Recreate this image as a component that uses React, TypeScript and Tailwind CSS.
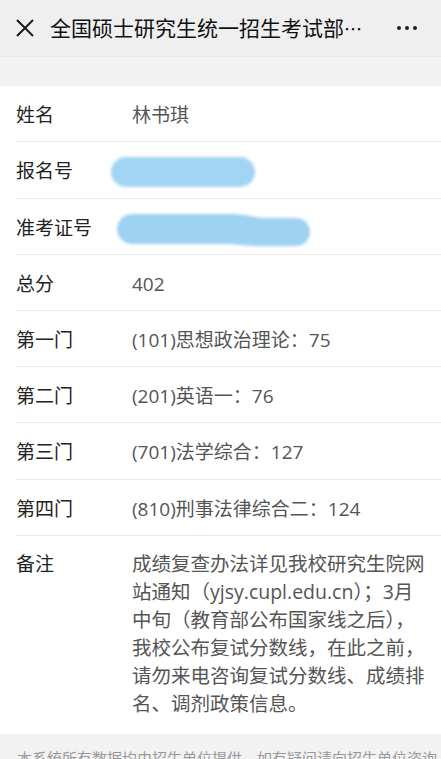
import React from "react";

const font = { fontFamily: '"Open Sans", "Noto Sans CJK SC", sans-serif' };

function Row({ label, h = "h-[56px]", children }: { label: string; h?: string; children?: React.ReactNode }) {
  return (
    <div className={`flex ${h} items-center pt-[3px] border-b border-[#e8e8e8] ml-[16px]`}>
      <div className="w-[116px] shrink-0 text-[19px] text-[#222]">{label}</div>
      <div className="flex-1 text-[19px] text-[#555]">{children}</div>
    </div>
  );
}

function Blob({ w, wave }: { w: number; wave?: boolean }) {
  return (
    <svg width={w + 10} height="40" viewBox={`0 0 ${w + 10} 40`} className="block">
      <defs>
        <filter id={`bl${w}`} x="-10%" y="-30%" width="120%" height="160%">
          <feGaussianBlur stdDeviation="1.5" />
        </filter>
      </defs>
      {wave ? (
        <path
          d={`M20 6 L${w * 0.62} 6 C${w * 0.7} 6 ${w * 0.72} 10 ${w * 0.8} 10 L${w - 10} 10 A14 14 0 0 1 ${w - 10} 38 L${w * 0.75} 38 C${w * 0.68} 38 ${w * 0.65} 36 ${w * 0.58} 36 L20 36 A15 15 0 0 1 20 6 Z`}
          fill="#9dd2f2"
          filter={`url(#bl${w})`}
        />
      ) : (
        <rect x="4" y="5" width={w} height="30" rx="15" fill="#a2d5f3" filter={`url(#bl${w})`} />
      )}
    </svg>
  );
}

export default function App() {
  return (
    <div className="w-[441px] h-[759px] overflow-hidden bg-[#f2f2f2]" style={font}>
      <div className="flex h-[57px] items-center bg-[#efefef] border-b border-[#e9e9e9]">
        <svg width="18" height="18" viewBox="0 0 18 18" className="ml-[16px] shrink-0">
          <path d="M1 1 L17 17 M17 1 L1 17" stroke="#1a1a1a" strokeWidth="2" />
        </svg>
        <div className="ml-[16px] text-[21px] text-[#111] whitespace-nowrap" style={{ fontFamily: '"Noto Sans CJK SC", sans-serif' }}>
          全国硕士研究生统一招生考试部<span className="text-[18px]">…</span>
        </div>
        <div className="ml-auto mr-[24px] flex gap-[4px]">
          <span className="w-[4px] h-[4px] rounded-full bg-[#222]" />
          <span className="w-[4px] h-[4px] rounded-full bg-[#222]" />
          <span className="w-[4px] h-[4px] rounded-full bg-[#222]" />
        </div>
      </div>
      <div className="h-[29px] bg-[#f2f2f2]" />
      <div className="bg-white">
        <Row label="姓名">林书琪</Row>
        <div className="flex h-[57px] items-center pt-[3px] border-b border-[#e8e8e8] ml-[16px]">
          <div className="w-[91px] shrink-0 text-[19px] text-[#222]">报名号</div>
          <Blob w={144} />
        </div>
        <div className="flex h-[56px] items-center pt-[3px] border-b border-[#e8e8e8] ml-[16px]">
          <div className="w-[96px] shrink-0 text-[19px] text-[#222]">准考证号</div>
          <Blob w={194} wave />
        </div>
        <Row label="总分">402</Row>
        <Row label="第一门">(101)思想政治理论：75</Row>
        <Row label="第二门">(201)英语一：76</Row>
        <Row label="第三门" h="h-[57px]">(701)法学综合：127</Row>
        <Row label="第四门">(810)刑事法律综合二：124</Row>
        <div className="flex ml-[16px] pt-[14px] pb-[16px]">
          <div className="w-[116px] shrink-0 text-[19px] leading-[28px] text-[#222]">备注</div>
          <div className="flex-1 text-[19.5px] leading-[28px] text-[#555] whitespace-nowrap">
            成绩复查办法详见我校研究生院网
            <br />
            站通知（yjsy.cupl.edu.cn）；3月
            <br />
            中旬（教育部公布国家线之后），
            <br />
            我校公布复试分数线，在此之前，
            <br />
            请勿来电咨询复试分数线、成绩排
            <br />
            名、调剂政策信息。
          </div>
        </div>
      </div>
      <div className="pt-[12px] px-[17px] text-[15px] leading-[24px] text-[#999] whitespace-nowrap">
        本系统所有数据均由招生单位提供，如有疑问请向招生单位咨询
      </div>
    </div>
  );
}
